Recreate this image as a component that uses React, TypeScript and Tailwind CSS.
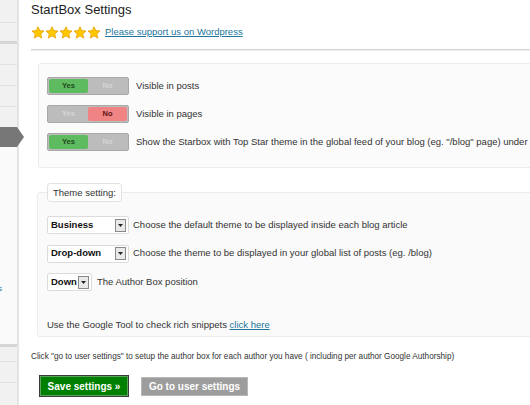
import React from "react";

const font = { fontFamily: '"Liberation Sans", Arial, sans-serif' };

function Star() {
  return (
    <svg width="14" height="13" viewBox="0 0 24 23" className="block">
      <path
        d="M12 1.2l3.1 6.9 7.5.8-5.6 5.1 1.6 7.4L12 17.6l-6.6 3.8 1.6-7.4L1.4 8.9l7.5-.8z"
        fill="#ffc800"
        stroke="#e59a00"
        strokeWidth="1.3"
        strokeLinejoin="round"
      />
    </svg>
  );
}

function Toggle({ on }: { on: boolean }) {
  return (
    <div className="flex h-[18px] w-[82px] shrink-0 rounded-[2px] border border-[#a8a8a8] bg-[#bcbcbc] p-[1px]">
      <div
        className={
          on
            ? "flex flex-1 items-center justify-center rounded-[2px] bg-[#5fbb5f] text-[7.5px] font-bold text-[#1d4a1d]"
            : "flex flex-1 items-center justify-center text-[7.5px] font-bold text-[#d6d6d6]"
        }
      >
        Yes
      </div>
      <div
        className={
          on
            ? "flex flex-1 items-center justify-center text-[7.5px] font-bold text-[#d6d6d6]"
            : "flex flex-1 items-center justify-center rounded-[2px] bg-[#f08383] text-[7.5px] font-bold text-[#5a1414]"
        }
      >
        No
      </div>
    </div>
  );
}

function Select({ label, w }: { label: string; w: string }) {
  return (
    <div
      className={`flex h-[18px] shrink-0 items-center justify-between rounded-[2px] border border-[#dcdcdc] bg-white pl-[3px] pr-[2px] ${w}`}
    >
      <span className="text-[9.5px] font-bold text-[#111]">{label}</span>
      <div className="flex h-[13px] w-[11px] items-center justify-center border border-[#8a8a8a] bg-[#e9e9e9]">
        <svg width="5" height="3" viewBox="0 0 5 3">
          <path d="M0 0h5L2.5 3z" fill="#222" />
        </svg>
      </div>
    </div>
  );
}

function SideItem({ h, cls = "" }: { h: string; cls?: string }) {
  return <div className={`${h} border-b border-[#e1e1e1] ${cls}`} />;
}

export default function App() {
  return (
    <div
      className="flex h-[405px] w-[530px] overflow-hidden bg-white text-[#333]"
      style={font}
    >
      {/* sidebar */}
      <div className="relative flex w-[17px] shrink-0 flex-col bg-[#f1f1f1]">
        <SideItem h="h-[23px]" />
        <div className="h-[21px] border-b-[3px] border-[#d6d6d6]" />
        <SideItem h="h-[21px]" />
        <SideItem h="h-[21px]" />
        <SideItem h="h-[21px]" />
        <div className="h-[20px]" />
        <div className="relative h-[20px] bg-[#777]">
          <div className="absolute left-[17px] top-0 h-0 w-0 border-y-[10px] border-l-[7px] border-y-transparent border-l-[#777]" />
        </div>
        <div className="flex h-[197px] flex-col bg-[#fafafa]">
          <div className="h-[137px]" />
          <div className="-ml-[2px] text-[8px] leading-[10px] text-[#21759b]">s</div>
        </div>
        <div className="h-[3px] bg-[#d6d6d6]" />
        <SideItem h="h-[15px]" />
        <SideItem h="h-[21px]" />
        <div className="flex-1" />
      </div>
      <div className="w-[2px] shrink-0 bg-[#e4e4e4]" />

      {/* main */}
      <div className="flex min-w-0 flex-1 flex-col pl-[12px]">
        <div className="mt-[2px] text-[13px] leading-[16px] text-[#222]">
          StartBox Settings
        </div>
        <div className="mt-[8px] flex h-[13px] items-center">
          <div className="flex gap-0">
            <Star />
            <Star />
            <Star />
            <Star />
            <Star />
          </div>
          <a className="ml-[4px] text-[9.5px] text-[#21759b] underline">
            Please support us on Wordpress
          </a>
        </div>
        <div className="mt-[10px] h-[2px] w-[600px] border-t border-[#d4d4d4] bg-[#efefef]" />

        {/* panel 1 */}
        <div className="ml-[7px] mt-[12px] flex h-[105px] w-[560px] flex-col gap-[10px] rounded-[3px] border border-[#ececec] bg-[#fbfbfb] pl-[8px] pt-[13px]">
          <div className="flex items-center gap-[7px]">
            <Toggle on />
            <span className="whitespace-nowrap text-[9.5px]">Visible in posts</span>
          </div>
          <div className="flex items-center gap-[7px]">
            <Toggle on={false} />
            <span className="whitespace-nowrap text-[9.5px]">Visible in pages</span>
          </div>
          <div className="flex items-center gap-[7px]">
            <Toggle on />
            <span className="whitespace-nowrap text-[9.5px]">
              Show the Starbox with Top Star theme in the global feed of your blog (eg. "/blog" page) under
            </span>
          </div>
        </div>

        {/* panel 2 */}
        <fieldset className="ml-[6px] mt-[15px] h-[154px] w-[560px] rounded-[3px] border border-[#ececec] bg-[#fafafa] pl-[9px]">
          <legend className="ml-[0px] rounded-[3px] border border-[#e2e2e2] bg-white px-[5px] text-[9.5px] leading-[17px]">
            Theme setting:
          </legend>
          <div className="mt-[14px] flex flex-col gap-[10.5px]">
            <div className="flex items-center gap-[4px]">
              <Select label="Business" w="w-[82px]" />
              <span className="whitespace-nowrap text-[9.5px]">
                Choose the default theme to be displayed inside each blog article
              </span>
            </div>
            <div className="flex items-center gap-[4px]">
              <Select label="Drop-down" w="w-[82px]" />
              <span className="whitespace-nowrap text-[9.5px]">
                Choose the theme to be displayed in your global list of posts (eg. /blog)
              </span>
            </div>
            <div className="flex items-center gap-[5px]">
              <Select label="Down" w="w-[45px]" />
              <span className="whitespace-nowrap text-[9.5px]">The Author Box position</span>
            </div>
          </div>
          <div className="mt-[27px] whitespace-nowrap text-[9.5px]">
            Use the Google Tool to check rich snippets{" "}
            <a className="text-[#21759b] underline">click here</a>
          </div>
        </fieldset>

        <div className="mt-[15px] whitespace-nowrap text-[8.2px] leading-[10px]">
          Click "go to user settings" to setup the author box for each author you have ( including per author Google Authorship)
        </div>

        <div className="mt-[13px] flex items-center gap-[12px] pl-[8px]">
          <button className="flex h-[22px] w-[90px] items-center justify-center border border-[#3b3b3b] bg-[#008000] text-[10px] font-bold text-white shadow-[inset_0_0_0_1px_#5aa55a]">
            Save settings »
          </button>
          <button className="flex h-[19px] w-[107px] items-center justify-center border border-[#b8b8b8] bg-[#9d9d9d] text-[10px] font-bold text-white">
            Go to user settings
          </button>
        </div>
      </div>
    </div>
  );
}
